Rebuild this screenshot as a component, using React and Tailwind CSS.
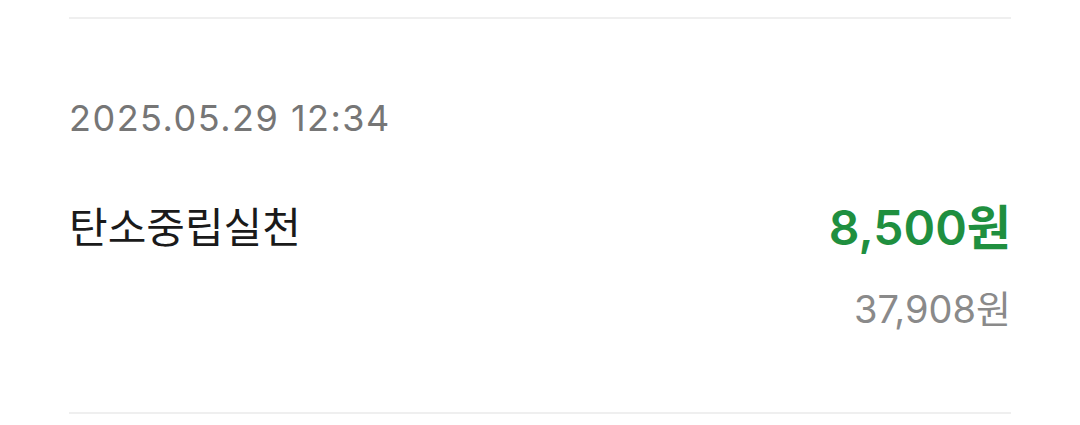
export default function App() {
  const font = { fontFamily: 'Inter, "Noto Sans CJK KR", sans-serif' };
  return (
    <div className="w-[1080px] h-[425px] bg-white overflow-hidden" style={font}>
      <div className="px-[69px]">
        <div className="mt-[17px] h-[2px] bg-[#efefef]" />
        <div className="mt-[79px] text-[36px] leading-[40px] tracking-[1.5px] text-[#767676]">2025.05.29 12:34</div>
        <div className="mt-[62px] flex justify-between items-start">
          <div className="text-[42px] leading-[56px] text-[#1a1a1a]">탄소중립실천</div>
          <div className="flex flex-col items-end">
            <div className="text-[48px] leading-[56px] font-semibold text-[#1f8f3f]">8,500원</div>
            <div className="mt-[31px] text-[38px] leading-[44px] text-[#8a8a8a]">37,908원</div>
          </div>
        </div>
        <div className="mt-[81px] h-[2px] bg-[#efefef]" />
      </div>
    </div>
  );
}
